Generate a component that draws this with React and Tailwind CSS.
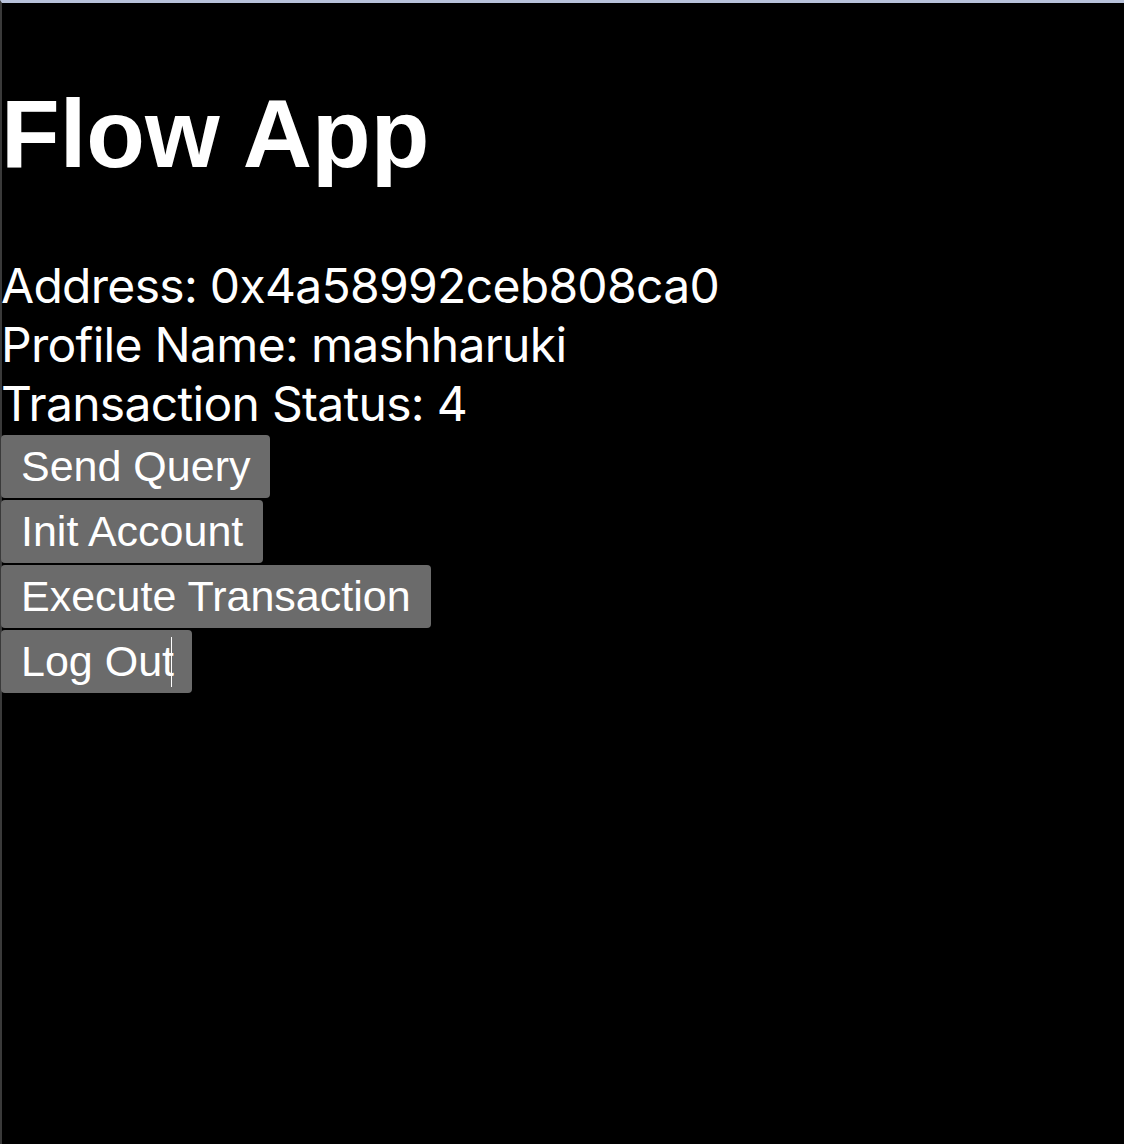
export default function App() {
    const buttons = ['Send Query', 'Init Account', 'Execute Transaction'];

    return (
        <div className="min-h-[1144px] bg-black text-white border-t-[3px] border-t-[#b8c2da] border-l-2 border-l-[#3a3a3a] flex flex-col items-start">
            <h1 className="mt-[76px] -ml-[1px] text-[96px] leading-[110px] font-bold font-['Liberation_Sans',Arial,sans-serif]">Flow App</h1>

            <div className="mt-[67px] -ml-[1px] text-[48px] leading-[59px] tracking-[-0.7px] font-['Inter','Noto_Sans',sans-serif]">
                <div>Address: 0x4a58992ceb808ca0</div>
                <div>Profile Name: mashharuki</div>
                <div>Transaction Status: 4</div>
            </div>

            <div className="mt-[2px] -ml-[1px] flex flex-col items-start gap-[2px] font-['Liberation_Sans',Arial,sans-serif]">
                {buttons.map((label) => (
                    <button key={label} className="h-[63px] px-5 rounded-[4px] bg-[#6b6b6b] text-white text-[43px] leading-[49px]">
                        {label}
                    </button>
                ))}
                <button className="h-[63px] px-5 rounded-[4px] bg-[#6b6b6b] text-white text-[43px] leading-[49px] flex items-center">
                    Log Out
                    <span className="inline-block w-px h-[50px] bg-white -ml-[3px]" />
                </button>
            </div>
        </div>
    );
}
